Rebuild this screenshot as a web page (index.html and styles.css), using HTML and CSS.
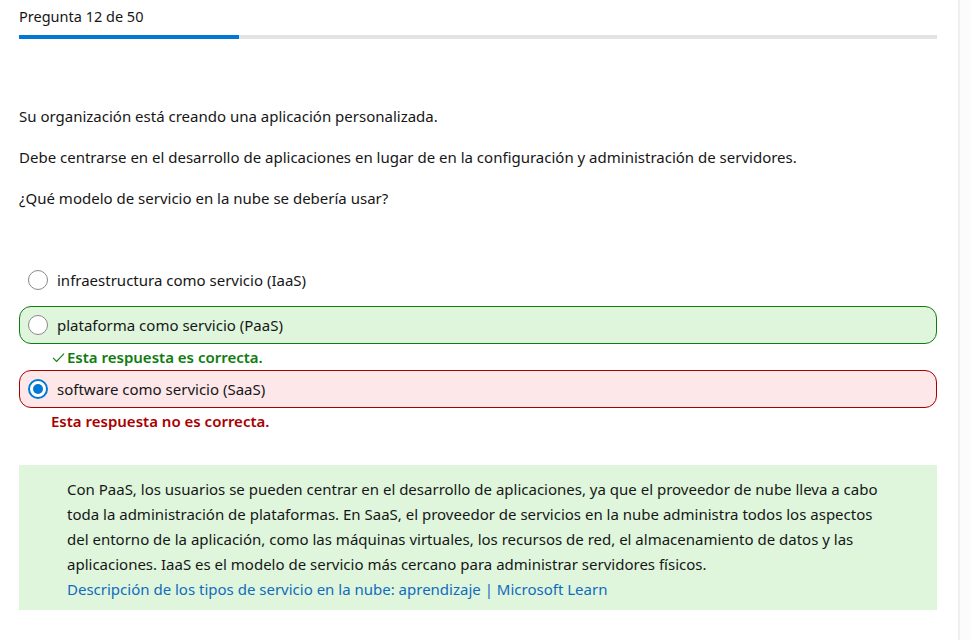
FILE: index.html
```html
<!DOCTYPE html>
<html lang="es">
<head>
<meta charset="utf-8">
<title>Pregunta 12 de 50</title>
<link rel="stylesheet" href="styles.css">
</head>
<body>
<div class="page">
  <main class="quiz">
    <header class="quiz-header">
      <div class="counter">Pregunta 12 de 50</div>
      <div class="progress"><div class="progress-fill" style="width: 24%"></div></div>
    </header>

    <section class="question">
      <p>Su organización está creando una aplicación personalizada.</p>
      <p>Debe centrarse en el desarrollo de aplicaciones en lugar de en la configuración y administración de servidores.</p>
      <p>¿Qué modelo de servicio en la nube se debería usar?</p>
    </section>

    <section class="options">
      <div class="option">
        <span class="radio"></span>
        <span class="label">infraestructura como servicio (IaaS)</span>
      </div>
      <div class="option option-correct">
        <span class="radio"></span>
        <span class="label">plataforma como servicio (PaaS)</span>
      </div>
      <div class="feedback feedback-correct">
        <svg class="check" width="13" height="11" viewBox="0 0 13 11"><path d="M1 5.8 L4.6 9.4 L12 1.6" fill="none" stroke="currentColor" stroke-width="1.1"/></svg>
        <span>Esta respuesta es correcta.</span>
      </div>
      <div class="option option-wrong">
        <span class="radio radio-checked"></span>
        <span class="label">software como servicio (SaaS)</span>
      </div>
      <div class="feedback feedback-wrong">
        <span>Esta respuesta no es correcta.</span>
      </div>
    </section>

    <section class="explanation">
      <p>Con PaaS, los usuarios se pueden centrar en el desarrollo de aplicaciones, ya que el proveedor de nube lleva a cabo toda la administración de plataformas. En SaaS, el proveedor de servicios en la nube administra todos los aspectos del entorno de la aplicación, como las máquinas virtuales, los recursos de red, el almacenamiento de datos y las aplicaciones. IaaS es el modelo de servicio más cercano para administrar servidores físicos.</p>
      <a class="link" href="#">Descripción de los tipos de servicio en la nube: aprendizaje | Microsoft Learn</a>
    </section>
  </main>
  <aside class="edge"></aside>
</div>
</body>
</html>
```

FILE: styles.css
```css
html, body {
  margin: 0;
  padding: 0;
  background: #ffffff;
}

body {
  font-family: "Segoe UI", "Noto Sans", "Open Sans", sans-serif;
  font-size: 15px;
  color: #161616;
}

.page {
  display: flex;
  width: 970px;
  height: 640px;
  overflow: hidden;
}

.quiz {
  width: 918px;
  padding: 0 21px 0 19px;
  border-right: 2px solid #efefef;
  box-sizing: content-box;
}

.edge {
  flex: 1;
  background: #fcfcfc;
}

.quiz-header {
  padding-top: 6px;
}

.counter {
  line-height: 20px;
  font-size: 14.5px;
}

.progress {
  margin-top: 9px;
  height: 4px;
  background: #e3e3e3;
}

.progress-fill {
  height: 100%;
  background: #0078d4;
}

.question {
  padding-top: 67px;
}

.question p {
  margin: 0 0 20px 0;
  line-height: 21px;
}

.question p:last-child {
  margin-bottom: 0;
}

.options {
  margin-top: 52px;
  display: flex;
  flex-direction: column;
}

.option {
  display: flex;
  align-items: center;
  gap: 9px;
  height: 38px;
  box-sizing: border-box;
  padding-left: 8px;
  border: 1px solid transparent;
  border-radius: 12px;
}

.option + .option {
  margin-top: 7px;
}

.option-correct {
  background: #dff6dd;
  border-color: #107c10;
}

.option-wrong {
  background: #fde7e9;
  border-color: #a80000;
}

.radio {
  width: 20px;
  height: 20px;
  box-sizing: border-box;
  border: 1px solid #8a8886;
  border-radius: 50%;
  background: #ffffff;
  flex: none;
  display: flex;
  align-items: center;
  justify-content: center;
}

.radio-checked {
  border: 2px solid #0078d4;
}

.radio-checked::after {
  content: "";
  width: 10px;
  height: 10px;
  border-radius: 50%;
  background: #0078d4;
}

.label {
  line-height: 20px;
}

.feedback {
  display: flex;
  align-items: center;
  height: 26px;
  font-weight: 600;
}

.feedback-correct {
  color: #107c10;
  padding-left: 33px;
  gap: 2px;
}

.feedback-correct .check {
  color: #107c10;
}

.feedback-wrong {
  color: #a80000;
  padding-left: 32px;
}

.explanation {
  margin-top: 31px;
  background: #dff6dd;
  padding: 12px 48px 8px 48px;
  line-height: 25px;
}

.explanation p {
  margin: 0;
}

.link {
  color: #0f6cbd;
  text-decoration: none;
}
```
